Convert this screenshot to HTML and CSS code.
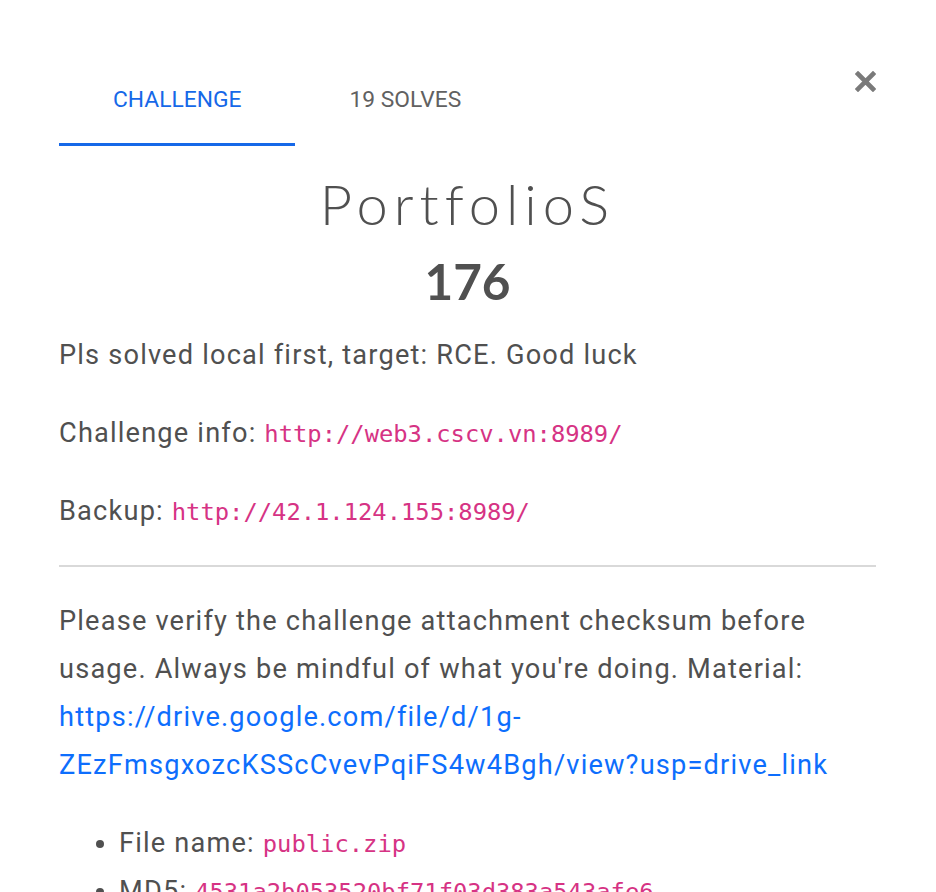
FILE: index.html
```html
<!DOCTYPE html>
<html lang="en">
<head>
<meta charset="utf-8">
<title>PortfolioS</title>
<link rel="stylesheet" href="styles.css">
</head>
<body>
<div class="modal">
  <div class="header">
    <nav class="tabs">
      <a class="tab active">CHALLENGE</a>
      <a class="tab">19 SOLVES</a>
    </nav>
    <button class="close" aria-label="Close">
      <svg width="21" height="21" viewBox="0 0 21 21"><path d="M3 3 L18 18 M18 3 L3 18" stroke="#7a7a7a" stroke-width="4.6" stroke-linecap="square" fill="none"/></svg>
    </button>
  </div>
  <h2 class="name">PortfolioS</h2>
  <h3 class="value">176</h3>
  <div class="desc">
    <p>Pls solved local first, target: RCE. Good luck</p>
    <p>Challenge info: <code>http://web3.cscv.vn:8989/</code></p>
    <p>Backup: <code>http://42.1.124.155:8989/</code></p>
    <hr class="rule">
    <p>Please verify the challenge attachment checksum before usage. Always be mindful of what you're doing. Material: <a class="link" href="#">https://drive.google.com/file/d/1g-ZEzFmsgxozcKSScCvevPqiFS4w4Bgh/view?usp=drive_link</a></p>
    <ul class="files">
      <li>File name: <code>public.zip</code></li>
      <li>MD5: <code>4531a2b053520bf71f03d383a543afe6</code></li>
    </ul>
  </div>
</div>
</body>
</html>
```

FILE: styles.css
```css
html, body {
  margin: 0;
  padding: 0;
  background: #ffffff;
}
body {
  font-family: Roboto, "Liberation Sans", sans-serif;
  color: #505050;
  overflow: hidden;
}
.modal {
  padding: 0 60px 0 59px;
}
.header {
  display: flex;
  justify-content: space-between;
  align-items: flex-start;
  margin-top: 60px;
}
.tabs {
  display: flex;
}
.tab {
  display: block;
  font-size: 22.8px;
  line-height: 28px;
  padding: 26px 54px 29px;
  border-bottom: 3px solid transparent;
  color: #616161;
  text-decoration: none;
}
.tab.active {
  color: #1668e8;
  border-bottom-color: #1668e8;
}
.close {
  margin-top: 11px;
  padding: 0;
  border: 0;
  background: none;
  width: 21px;
  height: 21px;
  display: block;
}
.close svg {
  display: block;
}
.name {
  margin: 24px 0 0;
  text-align: center;
  font-family: Lato, "Open Sans", sans-serif;
  font-weight: 300;
  font-size: 56px;
  line-height: 1.2;
  letter-spacing: 6px;
  color: #505050;
}
.value {
  margin: 16px 0 0;
  text-align: center;
  font-family: Lato, sans-serif;
  font-weight: 700;
  font-size: 49.5px;
  line-height: 57px;
  color: #505050;
}
.desc {
  margin-top: 21px;
  font-size: 27.2px;
  line-height: 48px;
  letter-spacing: 1.18px;
}
.desc p {
  margin: 0 0 30px;
}
code {
  font-family: "DejaVu Sans Mono", monospace;
  font-size: 23.8px;
  line-height: 1;
  letter-spacing: 0;
  color: #d63384;
}
.rule {
  margin: 0 0 30px;
  border: 0;
  height: 2px;
  background: #d9d9d9;
}
.link {
  color: #0d6efd;
  text-decoration: none;
}
.files {
  margin: 0;
  padding-left: 60px;
}
```
